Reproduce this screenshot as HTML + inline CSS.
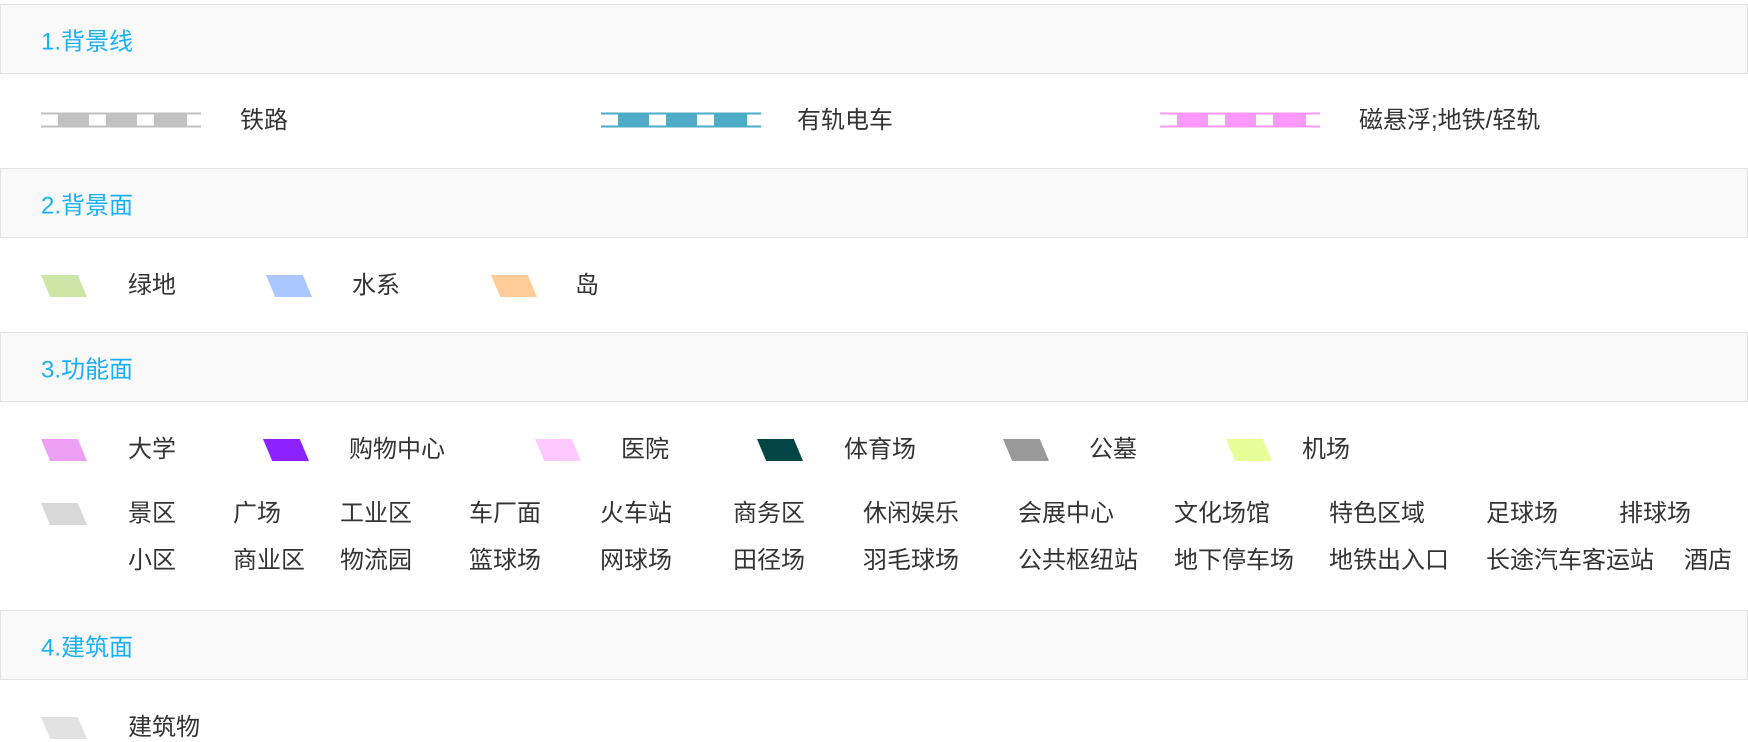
<!DOCTYPE html>
<html><head><meta charset="utf-8"><style>
body{margin:0;width:1748px;height:742px;background:#fff;position:relative;overflow:hidden;font-family:"Liberation Sans","Noto Sans CJK SC",sans-serif;color:#333;font-size:24px}
.h{position:absolute;left:0;width:1748px;background:#f9f9f9;border:1px solid #e2e2e2;color:#1ab0f5;font-size:24px;box-sizing:border-box}
.h span{position:absolute;left:40px;top:50%;transform:translateY(-50%)}
.t{position:absolute;line-height:28px;transform:translateY(-50%);white-space:nowrap}
.p{position:absolute;width:46px;height:22px;clip-path:polygon(0 0,80% 0,100% 100%,20% 100%);transform:translateY(-50%)}
.ln{position:absolute;width:160px;height:15px;transform:translateY(-50%)}
</style></head><body>
<div class="h" style="top:4px;height:70px"><span>1.背景线</span></div>
<svg class="ln" style="left:41px;top:120px" viewBox="0 0 160 15"><rect x="0" y="0" width="160" height="2" fill="#c0c0c0"/><rect x="0" y="13" width="160" height="2" fill="#c0c0c0"/><rect x="17" y="2" width="31" height="11" fill="#c0c0c0"/><rect x="65" y="2" width="31" height="11" fill="#c0c0c0"/><rect x="113" y="2" width="33" height="11" fill="#c0c0c0"/></svg>
<div class="t" style="left:240px;top:121px">铁路</div>
<svg class="ln" style="left:601px;top:120px" viewBox="0 0 160 15"><rect x="0" y="0" width="160" height="2" fill="#4eacc6"/><rect x="0" y="13" width="160" height="2" fill="#4eacc6"/><rect x="17" y="2" width="31" height="11" fill="#4eacc6"/><rect x="65" y="2" width="31" height="11" fill="#4eacc6"/><rect x="113" y="2" width="33" height="11" fill="#4eacc6"/></svg>
<div class="t" style="left:797px;top:121px">有轨电车</div>
<svg class="ln" style="left:1160px;top:120px" viewBox="0 0 160 15"><rect x="0" y="0" width="160" height="2" fill="#ff99ff"/><rect x="0" y="13" width="160" height="2" fill="#ff99ff"/><rect x="17" y="2" width="31" height="11" fill="#ff99ff"/><rect x="65" y="2" width="31" height="11" fill="#ff99ff"/><rect x="113" y="2" width="33" height="11" fill="#ff99ff"/></svg>
<div class="t" style="left:1359px;top:121px">磁悬浮;地铁/轻轨</div>

<div class="h" style="top:168px;height:70px"><span>2.背景面</span></div>
<div class="p" style="left:41px;top:286px;background:#cde6a8"></div><div class="t" style="left:128px;top:286px">绿地</div>
<div class="p" style="left:266px;top:286px;background:#aac8ff"></div><div class="t" style="left:352px;top:286px">水系</div>
<div class="p" style="left:491px;top:286px;background:#ffcc99"></div><div class="t" style="left:575px;top:286px">岛</div>

<div class="h" style="top:332px;height:70px"><span>3.功能面</span></div>
<div class="p" style="left:41px;top:450px;background:#eba0f5"></div><div class="t" style="left:128px;top:450px">大学</div>
<div class="p" style="left:263px;top:450px;background:#8b22ff"></div><div class="t" style="left:349px;top:450px">购物中心</div>
<div class="p" style="left:535px;top:450px;background:#ffc8ff"></div><div class="t" style="left:621px;top:450px">医院</div>
<div class="p" style="left:757px;top:450px;background:#034444"></div><div class="t" style="left:844px;top:450px">体育场</div>
<div class="p" style="left:1003px;top:450px;background:#999"></div><div class="t" style="left:1089px;top:450px">公墓</div>
<div class="p" style="left:1226px;top:450px;background:#e6ff99"></div><div class="t" style="left:1302px;top:450px">机场</div>

<div class="p" style="left:41px;top:514px;background:#d8d8d8"></div>
<div class="t" style="left:128px;top:514px">景区</div><div class="t" style="left:233px;top:514px">广场</div><div class="t" style="left:340px;top:514px">工业区</div><div class="t" style="left:469px;top:514px">车厂面</div><div class="t" style="left:600px;top:514px">火车站</div><div class="t" style="left:733px;top:514px">商务区</div><div class="t" style="left:863px;top:514px">休闲娱乐</div><div class="t" style="left:1018px;top:514px">会展中心</div><div class="t" style="left:1174px;top:514px">文化场馆</div><div class="t" style="left:1329px;top:514px">特色区域</div><div class="t" style="left:1486px;top:514px">足球场</div><div class="t" style="left:1619px;top:514px">排球场</div>
<div class="t" style="left:128px;top:561px">小区</div><div class="t" style="left:233px;top:561px">商业区</div><div class="t" style="left:340px;top:561px">物流园</div><div class="t" style="left:469px;top:561px">篮球场</div><div class="t" style="left:600px;top:561px">网球场</div><div class="t" style="left:733px;top:561px">田径场</div><div class="t" style="left:863px;top:561px">羽毛球场</div><div class="t" style="left:1018px;top:561px">公共枢纽站</div><div class="t" style="left:1174px;top:561px">地下停车场</div><div class="t" style="left:1329px;top:561px">地铁出入口</div><div class="t" style="left:1486px;top:561px">长途汽车客运站</div><div class="t" style="left:1684px;top:561px">酒店</div>

<div class="h" style="top:610px;height:70px"><span>4.建筑面</span></div>
<div class="p" style="left:41px;top:728px;background:#e2e2e2"></div><div class="t" style="left:128px;top:728px">建筑物</div>
</body></html>
